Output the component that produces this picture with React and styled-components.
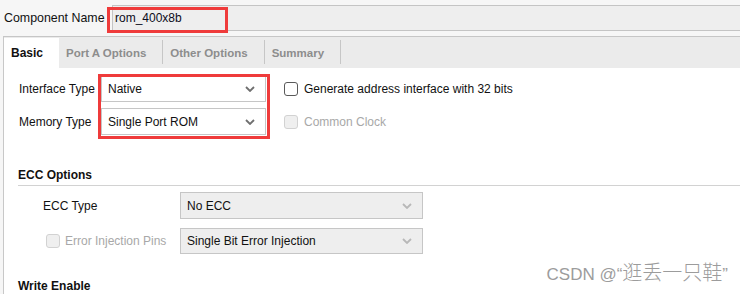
import React from "react";
import styled, { createGlobalStyle } from "styled-components";

const Global = createGlobalStyle`
  html, body { margin: 0; padding: 0; }
  body {
    background: #f6f6f6;
    font-family: "Liberation Sans", Arial, sans-serif;
    font-size: 12px;
    color: #111;
    width: 740px;
    height: 294px;
    overflow: hidden;
  }
`;

const Page = styled.div`
  position: relative;
  width: 740px;
  height: 294px;
  overflow: hidden;
  background: #f6f6f6;
`;

const Header = styled.div`
  display: flex;
  align-items: center;
  padding-top: 5px;
  height: 26px;
`;

const HeaderLabel = styled.div`
  width: 112px;
  padding-left: 4px;
  box-sizing: border-box;
  white-space: nowrap;
  font-size: 12.4px;
`;

const NameField = styled.div`
  flex: 1;
  height: 26px;
  box-sizing: border-box;
  border: 1px solid #c4c4c4;
  border-right: none;
  background: #eeeeee;
  padding-left: 2px;
  display: flex;
  align-items: center;
  color: #0c0c20;
`;

const Highlight = styled.div`
  position: absolute;
  border: 3px solid #ef3b3b;
  box-sizing: border-box;
  pointer-events: none;
  left: ${(p) => p.$left}px;
  top: ${(p) => p.$top}px;
  width: ${(p) => p.$w}px;
  height: ${(p) => p.$h}px;
`;

const Panel = styled.div`
  margin-top: 5px;
  margin-left: 3px;
  border-left: 1px solid #c8c8c8;
  border-top: 1px solid #c6c6c6;
  height: 260px;
  background: #ffffff;
`;

const TabBar = styled.div`
  display: flex;
  align-items: stretch;
  height: 31px;
  background: #ebebeb;
`;

const Tab = styled.div`
  display: flex;
  align-items: center;
  margin-top: 1px;
  padding: 0 16px 1px 7px;
  font-weight: bold;
  font-size: ${(p) => (p.$active ? 12 : 11.5)}px;
  background: ${(p) => (p.$active ? "#ffffff" : "transparent")};
  color: ${(p) => (p.$active ? "#111" : "#8d8d8d")};
  white-space: nowrap;
`;

const TabSep = styled.div`
  width: 1px;
  background: #c6c6c6;
  margin: 3px 0 4px;
`;

const Content = styled.div`
  padding: 7px 0 0 15px;
`;

const TopGrid = styled.div`
  display: grid;
  grid-template-columns: 82px 165px 1fr;
  grid-auto-rows: 27px;
  row-gap: 6px;
  align-items: center;
`;

const Label = styled.div`
  white-space: nowrap;
  color: ${(p) => (p.$disabled ? "#a8a8a8" : "#111")};
`;

const Select = styled.div`
  height: ${(p) => p.$h || 27}px;
  box-sizing: border-box;
  border: 1px solid #c6c6c6;
  background: ${(p) => (p.$grey ? "#eeeeee" : "#ffffff")};
  display: flex;
  align-items: center;
  justify-content: space-between;
  padding: 0 10px 0 6px;
  white-space: nowrap;
`;

const CheckRow = styled.label`
  display: flex;
  align-items: center;
  gap: 6px;
  margin-left: 18px;
  color: ${(p) => (p.$disabled ? "#a8a8a8" : "#111")};
  white-space: nowrap;
`;

const Box = styled.span`
  width: 14px;
  height: 14px;
  box-sizing: border-box;
  border-radius: 3px;
  border: 1.5px solid ${(p) => (p.$disabled ? "#d2d2d2" : "#5a5a5a")};
  background: ${(p) => (p.$disabled ? "#efefef" : "#ffffff")};
  flex: none;
`;

const SectionTitle = styled.div`
  margin-top: 32px;
  margin-left: -1px;
  line-height: 16px;
  padding-bottom: 2px;
  font-weight: bold;
  border-bottom: 1px solid #d2d2d2;
`;

const SubGrid = styled.div`
  display: grid;
  grid-template-columns: 137px 243px;
  margin-top: 6px;
  margin-left: 24px;
  row-gap: 9px;
  align-items: center;
`;

const SubCheck = styled.div`
  display: flex;
  align-items: center;
  gap: 5px;
  margin-left: 3px;
  color: #a8a8a8;
  white-space: nowrap;
`;

const SectionTitle2 = styled.div`
  margin-top: 24px;
  margin-left: -1px;
  line-height: 16px;
  font-weight: bold;
`;

const Watermark = styled.div`
  position: absolute;
  right: 12px;
  bottom: 8px;
  font-family: "Liberation Sans", "Noto Sans CJK SC", sans-serif;
  font-size: 17px;
  color: #9c9c9c;
  text-shadow: 0 0 1px #ffffff;
  white-space: pre;
  display: flex;
  align-items: baseline;
`;

const WatermarkCJK = styled.span`
  font-family: "Noto Sans CJK SC", sans-serif;
  font-size: 20px;
  font-weight: 300;
`;

const Chevron = ({ light }) => (
  <svg width="10" height="6" viewBox="0 0 10 6">
    <path
      d="M1 1 L5 5 L9 1"
      fill="none"
      stroke={light ? "#b8b8b8" : "#6f6f6f"}
      strokeWidth="1.8"
    />
  </svg>
);

export default function App() {
  return (
    <Page>
      <Global />
      <Header>
        <HeaderLabel>Component Name</HeaderLabel>
        <NameField>rom_400x8b</NameField>
      </Header>
      <Panel>
        <TabBar>
          <Tab $active>Basic</Tab>
          <Tab>Port A Options</Tab>
          <TabSep />
          <Tab>Other Options</Tab>
          <TabSep />
          <Tab>Summary</Tab>
          <TabSep />
        </TabBar>
        <Content>
          <TopGrid>
            <Label>Interface Type</Label>
            <Select>
              Native
              <Chevron />
            </Select>
            <CheckRow>
              <Box />
              Generate address interface with 32 bits
            </CheckRow>
            <Label>Memory Type</Label>
            <Select>
              Single Port ROM
              <Chevron />
            </Select>
            <CheckRow $disabled>
              <Box $disabled />
              Common Clock
            </CheckRow>
          </TopGrid>
          <SectionTitle>ECC Options</SectionTitle>
          <SubGrid>
            <Label>ECC Type</Label>
            <Select $grey>
              No ECC
              <Chevron light />
            </Select>
            <SubCheck>
              <Box $disabled />
              Error Injection Pins
            </SubCheck>
            <Select $grey $h={26}>
              Single Bit Error Injection
              <Chevron light />
            </Select>
          </SubGrid>
          <SectionTitle2>Write Enable</SectionTitle2>
        </Content>
      </Panel>
      <Highlight $left={107} $top={7} $w={121} $h={26} />
      <Highlight $left={98} $top={74} $w={172} $h={65} />
      <Watermark>
        {"CSDN @“"}
        <WatermarkCJK>逛丢一只鞋</WatermarkCJK>
        {"”"}
      </Watermark>
    </Page>
  );
}
